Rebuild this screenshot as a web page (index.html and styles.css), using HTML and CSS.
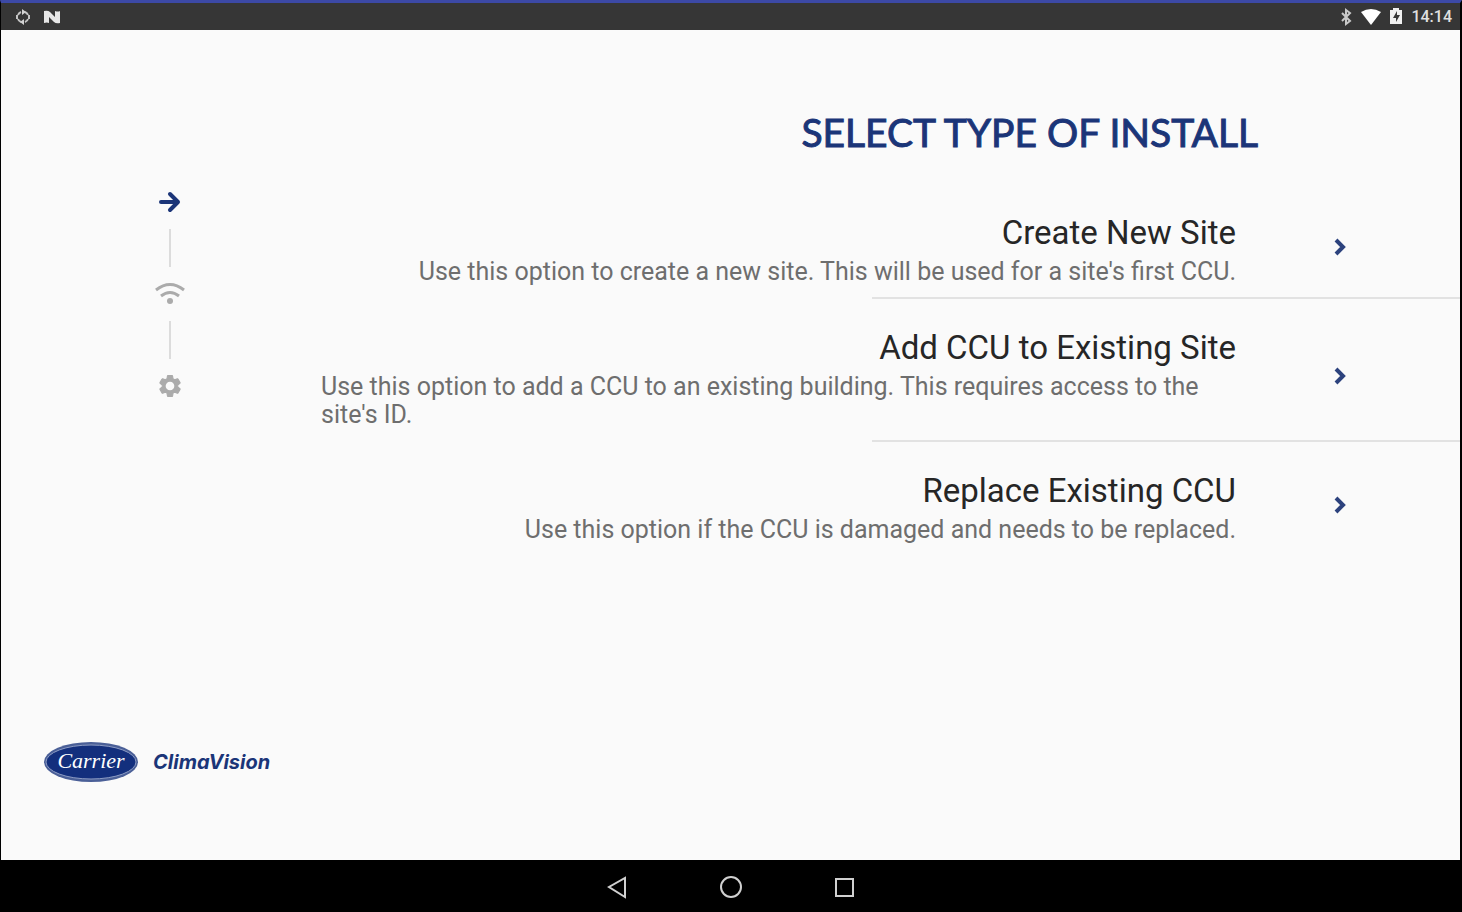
FILE: index.html
```html
<!DOCTYPE html>
<html lang="en">
<head>
    <meta charset="UTF-8">
    <meta name="viewport" content="width=device-width, initial-scale=1.0">
    <title>Select Type of Install</title>
    <link rel="stylesheet" href="styles.css">
</head>
<body>
    <header class="status-bar">
        <div class="status-group">
            <svg width="16" height="18" viewBox="0 0 16 18">
                <path d="M3 7a5 5 0 0 1 3-3M10 4a5 5 0 0 1 3 3M13 11a5 5 0 0 1-3 3M6 14a5 5 0 0 1-3-3M2 7v4M14 7v4" fill="none" stroke="#c4c4c4" stroke-width="2"/>
                <path d="M7 1l4 3-4 3zM9 17l-4-3 4-3z" fill="#d4d4d4"/>
            </svg>
            <svg width="18" height="16" viewBox="0 0 18 16">
                <path d="M1 2q4-1 6 1l5 5V2q3 1 5 0v12q-4 1-6-1L6 8v6q-2-1-5 0z" fill="#e6e6e6"/>
            </svg>
        </div>
        <div class="status-group status-right">
            <svg width="12" height="18" viewBox="0 0 12 18">
                <path d="M2 5l8 8-4 3V2l4 3-8 8" fill="none" stroke="#c8c8c8" stroke-width="2"/>
            </svg>
            <svg width="20" height="18" viewBox="0 0 20 18">
                <path d="M0 4q10-6 20 0L10 17z" fill="#fff"/>
            </svg>
            <svg width="12" height="18" viewBox="0 0 12 18">
                <path d="M0 2h3V0h6v2h3v14H0z" fill="#f0f0f0"/>
                <path d="M7 3L3 10h3v4l4-7H7z" fill="#363636"/>
            </svg>
            <span class="clock">14:14</span>
        </div>
    </header>

    <main class="screen">
        <aside class="sidebar">
            <ol class="steps">
                <li class="step">
                    <svg width="30" height="26" viewBox="0 0 30 26" role="img" aria-label="Install type">
                        <path d="M6 13h17M15 5l8 8-8 8" fill="none" stroke="#1b3578" stroke-width="4" stroke-linecap="round" stroke-linejoin="round"/>
                    </svg>
                </li>
                <li class="step">
                    <svg width="30" height="26" viewBox="0 0 30 26" role="img" aria-label="Wi-Fi">
                        <path d="M1 9q14-11 28 0M6 15q9-7 18 0" fill="none" stroke="#ababab" stroke-width="3"/>
                        <circle cx="15" cy="20" r="3" fill="#ababab"/>
                    </svg>
                </li>
                <li class="step">
                    <svg width="30" height="26" viewBox="0 0 24 24" role="img" aria-label="Settings">
                        <path d="M19.140 12.940c.04-.3.06-.61.06-.94s-.02-.64-.07-.94l2.030-1.580a.49.49 0 0 0 .12-.61l-1.920-3.320a.49.49 0 0 0-.59-.22l-2.390.96a7 7 0 0 0-1.620-.94l-.36-2.540a.48.48 0 0 0-.48-.41h-3.840a.48.48 0 0 0-.47.41l-.36 2.540a7 7 0 0 0-1.620.94l-2.390-.96a.48.48 0 0 0-.59.22L2.740 8.870a.48.48 0 0 0 .12.61l2.030 1.580a6 6 0 0 0 0 1.880l-2.030 1.580a.49.49 0 0 0-.12.61l1.920 3.320c.12.22.37.29.59.22l2.390-.96a7 7 0 0 0 1.620.94l.36 2.540c.05.24.24.41.48.41h3.840c.24 0 .44-.17.47-.41l.36-2.540a7 7 0 0 0 1.620-.94l2.390.96c.22.08.47 0 .59-.22l1.920-3.320a.48.48 0 0 0-.12-.61z" fill="#ababab" stroke="#ababab" stroke-width="1"/>
                        <circle cx="12" cy="12" r="4" fill="#fafafa"/>
                    </svg>
                </li>
            </ol>
            <div class="brand">
                <svg width="96" height="42" viewBox="0 0 96 42">
                    <ellipse cx="48" cy="21" rx="47" ry="20" fill="#4a5f97"/>
                    <ellipse cx="48" cy="21" rx="45" ry="17" fill="#132f7d" stroke="#8d9cc4" stroke-width="1"/>
                    <text class="brand-mark" x="48" y="27" text-anchor="middle">Carrier</text>
                </svg>
                <span class="brand-name">ClimaVision</span>
            </div>
        </aside>

        <section class="content">
            <h1>SELECT TYPE OF INSTALL</h1>
            <ul class="options">
                <li>
                    <button class="option" type="button">
                        <span class="option-text">
                            <span class="option-title">Create New Site</span>
                            <span class="option-desc">Use this option to create a new site. This will be used for a site's first CCU.</span>
                        </span>
                        <svg class="chevron" width="14" height="20" viewBox="0 0 14 20"><path d="M2 3l7 7-7 7" fill="none" stroke="#2c427d" stroke-width="4"/></svg>
                    </button>
                </li>
                <li>
                    <button class="option" type="button">
                        <span class="option-text">
                            <span class="option-title">Add CCU to Existing Site</span>
                            <span class="option-desc">Use this option to add a CCU to an existing building. This requires access to the site's ID.</span>
                        </span>
                        <svg class="chevron" width="14" height="20" viewBox="0 0 14 20"><path d="M2 3l7 7-7 7" fill="none" stroke="#2c427d" stroke-width="4"/></svg>
                    </button>
                </li>
                <li>
                    <button class="option" type="button">
                        <span class="option-text">
                            <span class="option-title">Replace Existing CCU</span>
                            <span class="option-desc">Use this option if the CCU is damaged and needs to be replaced.</span>
                        </span>
                        <svg class="chevron" width="14" height="20" viewBox="0 0 14 20"><path d="M2 3l7 7-7 7" fill="none" stroke="#2c427d" stroke-width="4"/></svg>
                    </button>
                </li>
            </ul>
        </section>
    </main>

    <nav class="nav-bar">
        <button type="button" aria-label="Back">
            <svg width="24" height="24" viewBox="0 0 24 24"><path d="M20 3v19L4 12z" fill="none" stroke="#d0d0d0" stroke-width="2"/></svg>
        </button>
        <button type="button" aria-label="Home">
            <svg width="24" height="24" viewBox="0 0 24 24"><circle cx="12" cy="12" r="10" fill="none" stroke="#d0d0d0" stroke-width="2"/></svg>
        </button>
        <button type="button" aria-label="Recent apps">
            <svg width="24" height="24" viewBox="0 0 24 24"><path d="M3 4h17v17H3z" fill="none" stroke="#d0d0d0" stroke-width="2"/></svg>
        </button>
    </nav>
</body>
</html>
```
FILE: styles.css
```css
* {
    box-sizing: border-box;
}
body {
    margin: 0;
    min-height: 100vh;
    display: flex;
    flex-direction: column;
    border: solid #000;
    border-width: 3px 2px 0 1px;
    border-top-color: #3c49a6;
    background-color: #fafafa;
    font-family: Roboto, sans-serif;
}
svg {
    display: block;
    flex-shrink: 0;
}
ol, ul {
    margin: 0;
    padding: 0;
    list-style: none;
}
button {
    border: 0;
    padding: 0;
    background: none;
    font-family: inherit;
    cursor: pointer;
}

.status-bar {
    display: flex;
    justify-content: space-between;
    height: 27px;
    padding: 0 8px 0 14px;
    background-color: #363636;
}
.status-group {
    display: flex;
    align-items: center;
    gap: 12px;
}
.status-right {
    gap: 9px;
}
.clock {
    color: #e0e0e0;
    font-size: 16px;
    font-weight: 500;
}

.screen {
    flex: 1;
    display: flex;
}
.sidebar {
    width: 320px;
    display: flex;
    flex-direction: column;
    justify-content: space-between;
    padding: 159px 0 77px 42px;
}
.steps {
    width: 254px;
}
.step {
    display: flex;
    flex-direction: column;
    align-items: center;
}
/* connector between two steps */
.step + .step::before {
    content: "";
    width: 2px;
    height: 38px;
    margin: 14px 0;
    background-color: #dcdcdc;
}
.brand {
    display: flex;
    align-items: center;
    gap: 14px;
}
.brand-mark {
    fill: #fff;
    font-family: "Liberation Serif", serif;
    font-size: 22px;
    font-style: italic;
}
.brand-name {
    color: #1b3578;
    font-family: Inter, sans-serif;
    font-size: 20px;
    font-style: italic;
    font-weight: 700;
}

.content {
    flex: 1;
}
h1 {
    margin: 0;
    padding: 78px 202px 0 0;
    color: #1b3578;
    font-family: Lato, sans-serif;
    font-size: 39px;
    font-weight: 400;
    line-height: 48px;
    text-align: right;
    -webkit-text-stroke: 1px #1b3578;
}
.options {
    padding-top: 28px;
}
.options li + li {
    border-top: 2px solid transparent;
    border-image: linear-gradient(to right, transparent 551px, #e2e2e2 551px) 1;
    border-width: 2px 0 0;
}
.option {
    width: 100%;
    display: flex;
    align-items: center;
    gap: 98px;
    padding: 29px 112px 11px 0;
}
.option-text {
    flex: 1;
    display: flex;
    flex-direction: column;
    align-items: flex-end;
    gap: 5px;
    text-align: left;
}
.option-title {
    color: #262626;
    font-size: 33px;
    line-height: 40px;
}
.option-desc {
    color: #6e6e6e;
    font-size: 25px;
    line-height: 28px;
}
.chevron {
    margin-bottom: 6px;
}

.nav-bar {
    display: flex;
    align-items: center;
    justify-content: center;
    gap: 90px;
    height: 52px;
    padding-top: 2px;
    background-color: #000;
}
```
